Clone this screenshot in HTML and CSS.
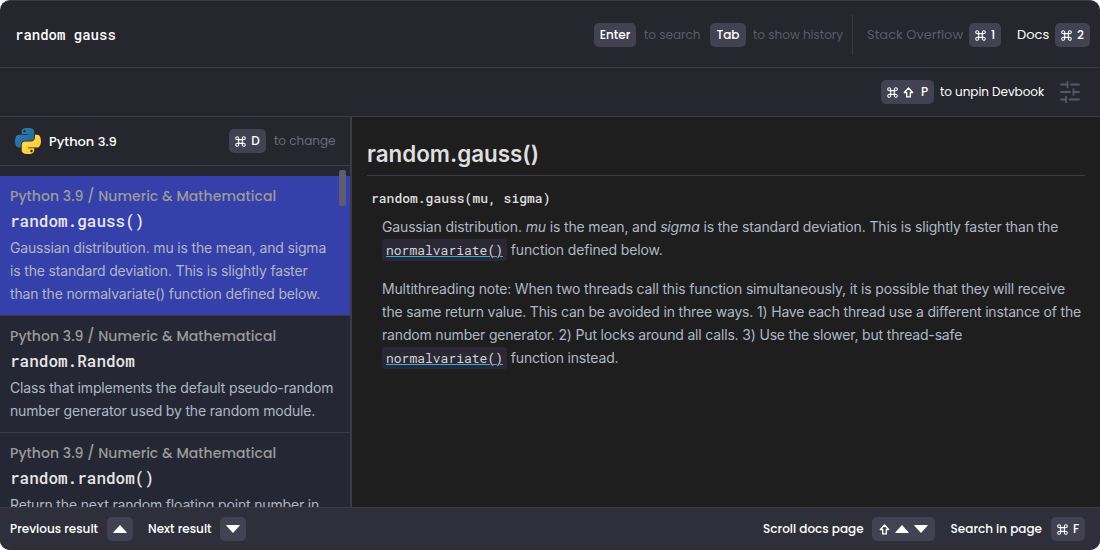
FILE: index.html
```
<!DOCTYPE html>
<html lang="en">
<head>
<meta charset="utf-8">
<title>Devbook</title>
<link rel="stylesheet" href="styles.css">
</head>
<body>
<svg class="defs" width="0" height="0">
  <symbol id="cmd" viewBox="0 0 12 12"><path d="M4 4h4v4H4zM4 4H2.700A1.600 1.600 0 1 1 4 2.600zM8 4V2.600A1.600 1.600 0 1 1 9.300 4zM8 8h1.300A1.600 1.600 0 1 1 8 9.400zM4 8v1.400A1.600 1.600 0 1 1 2.700 8z" fill="none" stroke="currentColor" stroke-width="1.2"/></symbol>
  <symbol id="shift" viewBox="0 0 12 12"><path d="M6 1.2 10.6 6H8v4.800H4V6H1.400z" fill="none" stroke="currentColor" stroke-width="1.5" stroke-linejoin="round"/></symbol>
  <symbol id="up" viewBox="0 0 14 8"><path d="M7 0 13.600 7.200Q14 8 13.200 8H.8Q0 8 .4 7.200z" fill="currentColor"/></symbol>
  <symbol id="down" viewBox="0 0 14 8"><path d="M7 8 13.600.8Q14 0 13.200 0H.8Q0 0 .4.8z" fill="currentColor"/></symbol>
</svg>
<div class="window">
  <header class="search">
    <div class="query">random gauss</div>
    <div class="hints">
      <kbd class="key enter">Enter</kbd><span class="hint h1">to search</span>
      <kbd class="key tab">Tab</kbd><span class="hint h2">to show history</span>
    </div>
    <div class="sources">
      <span class="source off">Stack Overflow</span><kbd class="key k1"><svg class="g"><use href="#cmd"/></svg>1</kbd>
      <span class="source docs">Docs</span><kbd class="key k2"><svg class="g"><use href="#cmd"/></svg>2</kbd>
    </div>
  </header>
  <div class="toolbar">
    <kbd class="key pin"><svg class="g"><use href="#cmd"/></svg><svg class="g"><use href="#shift"/></svg><span>P</span></kbd>
    <span class="label">to unpin Devbook</span>
    <svg class="sliders" viewBox="0 0 20 22"><path d="M1 3.500h6M11 3.500h8M7.500.8v5.600M1 11h9M14 11h5M13.500 8.200v5.600M1 18.500h4M9.500 18.500H19M6 15.700v5.600" fill="none" stroke="currentColor" stroke-width="1.800" stroke-linecap="round"/></svg>
  </div>
  <main class="body">
    <aside class="side">
      <div class="lang">
        <svg class="python" viewBox="0 0 110 112"><defs><linearGradient id="a" x2="1" y2="1"><stop stop-color="#2f81b7"/><stop offset="1" stop-color="#27618c"/></linearGradient><linearGradient id="b" x2="1" y2="1"><stop stop-color="#ffe052"/><stop offset="1" stop-color="#ffc331"/></linearGradient></defs><path fill="url(#a)" d="M54.300 0C49.700 0 45.300.4 41.500 1.100 30.100 3.100 28 7.300 28 15.100V25.400H55V28.900H17.900C10 28.900 3.200 33.600 1 42.600-1.500 53-1.600 59.500 1 70.200 2.900 78.200 7.500 83.800 15.300 83.800H24.600V71.500C24.600 62.600 32.300 54.700 41.500 54.700H68.400C75.900 54.700 81.900 48.500 81.900 41V15.100C81.900 7.800 75.700 2.300 68.400 1.100 63.700.3 58.900 0 54.300 0zM39.700 8.300a5.100 5.100 0 1 1 0 10.300 5.100 5.100 0 0 1 0-10.300z"/><path fill="url(#b)" d="M85.200 28.900V40.900C85.200 50.200 77.300 58.100 68.400 58.100H41.500C34.100 58.100 28 64.400 28 71.800V97.400C28 104.700 34.300 109 41.500 111.100 50 113.600 58.200 114.100 68.400 111.100 75.100 109.100 81.900 105.200 81.900 97.400V87.100H55V83.800H95.400C103.200 83.800 106.100 78.300 108.900 70.200 111.700 61.900 111.500 53.900 108.900 42.600 107 34.800 103.200 28.900 95.400 28.900zM70.100 94a5.100 5.100 0 1 1 0 10.300 5.100 5.100 0 0 1 0-10.300z"/></svg>
        <span class="name">Python 3.9</span>
        <kbd class="key kd"><svg class="g"><use href="#cmd"/></svg>D</kbd>
        <span class="hint">to change</span>
      </div>
      <div class="results">
        <article class="item active"><div class="crumb">Python 3.9 / Numeric &amp; Mathematical</div><h3>random.gauss()</h3><p>Gaussian distribution. mu is the mean, and sigma is the standard deviation. This is slightly faster than the normalvariate() function defined below.</p></article>
        <article class="item"><div class="crumb">Python 3.9 / Numeric &amp; Mathematical</div><h3>random.Random</h3><p>Class that implements the default pseudo-random number generator used by the random module.</p></article>
        <article class="item"><div class="crumb">Python 3.9 / Numeric &amp; Mathematical</div><h3>random.random()</h3><p>Return the next random floating point number in</p></article>
        <div class="thumb"></div>
      </div>
    </aside>
    <section class="doc">
      <h1>random.gauss()</h1>
      <div class="signature">random.gauss(mu, sigma)</div>
      <div class="text">
        <p class="first">Gaussian distribution. <em>mu</em> is the mean, and <em>sigma</em> is the standard deviation. This is slightly faster than the <a>normalvariate()</a> function defined below.</p>
        <p>Multithreading note: When two threads call this function simultaneously, it is possible that they will receive the same return value. This can be avoided in three ways. 1) Have each thread use a different instance of the random number generator. 2) Put locks around all calls. 3) Use the slower, but thread-safe <a>normalvariate()</a> function instead.</p>
      </div>
    </section>
  </main>
  <footer class="foot">
    <span>Previous result</span><kbd class="key arrow"><svg class="t"><use href="#up"/></svg></kbd>
    <span class="next">Next result</span><kbd class="key arrow n"><svg class="t"><use href="#down"/></svg></kbd>
    <span class="scroll">Scroll docs page</span><kbd class="key ks"><svg class="g"><use href="#shift"/></svg><svg class="t"><use href="#up"/></svg><svg class="t"><use href="#down"/></svg></kbd>
    <span class="find">Search in page</span><kbd class="key kf"><svg class="g"><use href="#cmd"/></svg>F</kbd>
  </footer>
</div>
</body>
</html>
```

FILE: styles.css
```
* { box-sizing: border-box; }
body { margin: 0; background: #fff; font: 500 12px/18px Poppins, Lato, sans-serif; color: #fff; }
.defs { display: block; height: 0; }
.window { width: 1100px; height: 550px; display: flex; flex-direction: column; overflow: hidden; border-radius: 10px; background: #25262e; border-top: 1px solid #3b3a46; }
.key { display: flex; flex: none; align-items: center; justify-content: center; gap: 5px; height: 24px; border-radius: 5px; background: #434252; color: #fff; font: inherit; }
.g { width: 11px; height: 11px; flex: none; margin-top: 1px; }
.t { width: 14px; height: 8px; flex: none; }
.hint { color: #5c5b6b; font-weight: 400; }
.search { height: 67px; flex: none; display: flex; align-items: center; border-bottom: 1px solid #3b3a46; padding: 1px 10px 0 15px; white-space: nowrap; }
.query { flex: 1; padding-top: 1px; font: 500 14px/20px "Roboto Mono", "Liberation Mono", monospace; }
.hints { display: flex; align-items: center; height: 40px; width: 259px; border-right: 1px solid #3b3a46; }
.enter { width: 42px; }
.h1 { width: 66px; padding-left: 8px; }
.hints .tab { width: 36px; margin-left: 8px; }
.h2 { padding-left: 7px; }
.sources { display: flex; align-items: center; font-size: 12px; padding-left: 14px; }
.source { font-size: 13px; font-weight: 400; }
.off { color: #5c5b6b; width: 102px; }
.k1 { width: 32px; }
.docs { width: 38px; margin-left: 16px; }
.k2 { width: 35px; }
.toolbar { height: 49px; flex: none; display: flex; align-items: center; justify-content: flex-end; padding-right: 20px; border-bottom: 1px solid #3b3a46; }
.pin { width: 53px; margin-right: 6px; }
.pin span { padding-left: 2px; }
.label { width: 104px; font-weight: 400; white-space: nowrap; letter-spacing: -.05px; }
.sliders { width: 20px; height: 22px; margin-left: 16px; color: #5a5969; }
.body { flex: 1; min-height: 0; display: flex; }
.side { width: 352px; flex: none; display: flex; flex-direction: column; border-right: 2px solid #3b3a46; }
.lang { height: 49px; flex: none; display: flex; align-items: center; padding: 0 15px; border-bottom: 1px solid #3b3a46; }
.python { width: 26px; height: 26px; margin-right: 8px; }
.name { flex: 1; padding-top: 1px; font-size: 13px; }
.kd { width: 37px; margin-right: 8px; }
.lang .hint { width: 61px; white-space: nowrap; color: #6d6c7b; }
.results { position: relative; flex: 1; min-height: 0; overflow: hidden; padding-top: 10px; background: #262735; }
.item { padding: 10px 15px 10px 10px; border-bottom: 1px solid #3b3a46; }
.active { background: #3540aa; }
.crumb { color: #9b9b9b; font-size: 14px; line-height: 21px; letter-spacing: .05px; white-space: nowrap; }
h3 { margin: 3px 0 5px; font: 500 16px/21px "Roboto Mono", "Liberation Mono", monospace; color: #e6e6e6; }
p { margin: 0; font: 400 14px/23px Inter, sans-serif; letter-spacing: -.165px; color: #afb8c4; }
.thumb { position: absolute; top: 4px; right: 4px; width: 7px; height: 36px; border-radius: 2px; background: #5d5c70; }
.doc { flex: 1; background: #1e1e1e; padding: 15px; }
h1 { margin: 0; height: 44px; border-bottom: 1px solid #3b3a46; font: 600 22.4px/44px Inter, sans-serif; color: #dfdfdf; }
.signature { margin: 12px 0 0 4px; font: 500 13px/20px "Roboto Mono", "Liberation Mono", monospace; color: #dfdfdf; }
.text { padding: 7px 0 0 15px; }
.text p { letter-spacing: -.175px; }
.text .first { letter-spacing: -.15px; }
.text p + p { margin-top: 16px; }
.text a { padding: 2px 4px; border-radius: 3px; background: #2a2834; color: #d4d4d4; font: 400 13px "Roboto Mono", "Liberation Mono", monospace; letter-spacing: 0; text-decoration: underline 1px #30b0e0; }
.foot { height: 43px; flex: none; display: flex; align-items: center; border-top: 1px solid #3b3a46; background: #2e2f3b; padding: 0 15px 0 10px; white-space: nowrap; }
.arrow { width: 26px; margin-left: 9px; }
.next { margin-left: 15px; }
.n { margin-left: 8px; }
.scroll { margin-left: auto; }
.ks { width: 63px; margin-left: 8px; }
.find { margin-left: 16px; }
.kf { width: 34px; margin-left: 9px; }
```
